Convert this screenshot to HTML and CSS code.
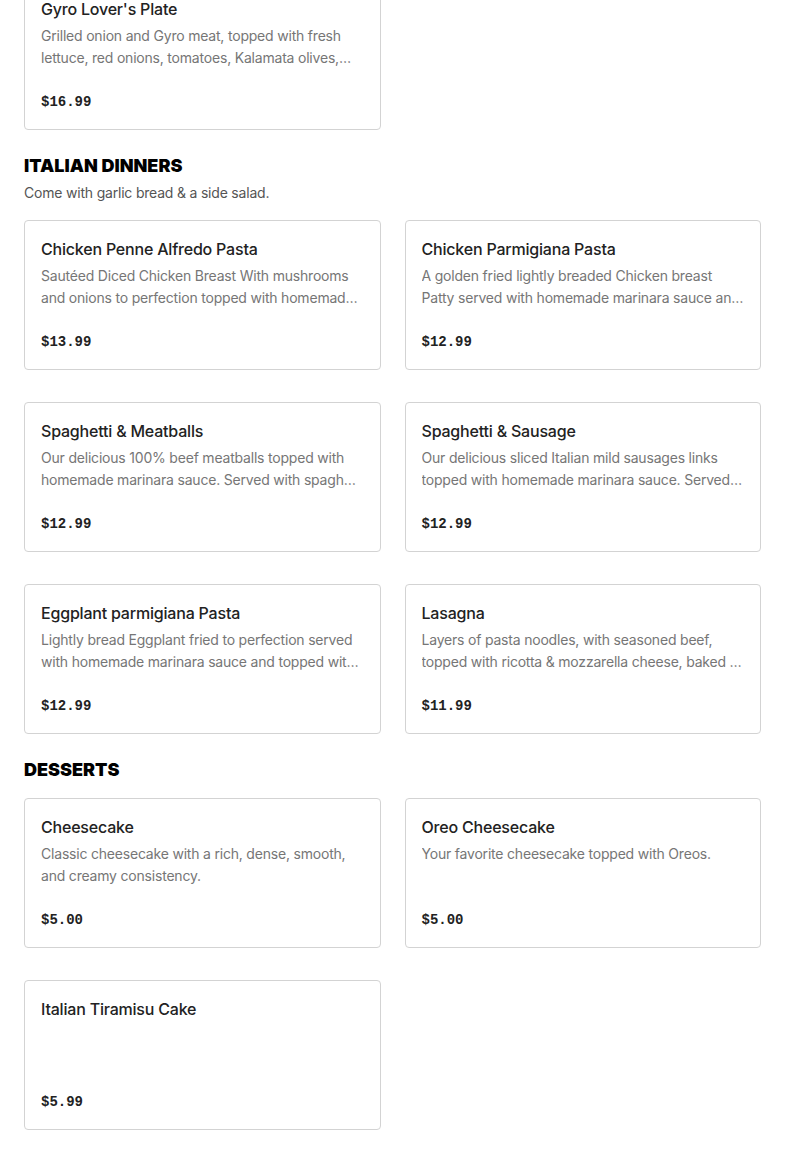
FILE: index.html
```html
<!DOCTYPE html>
<html lang="en">

<head>
    <meta charset="UTF-8">
    <meta name="viewport" content="width=device-width, initial-scale=1.0">
    <title>Menu</title>
    <link rel="stylesheet" href="styles.css">
</head>

<body>
    <div class="menu">
        <section class="section section-top">
            <div class="grid">
                <div class="card">
                    <h3 class="card-title">Gyro Lover's Plate</h3>
                    <p class="card-desc">Grilled onion and Gyro meat, topped with fresh lettuce, red onions, tomatoes, Kalamata olives, feta cheese and tzatziki sauce.</p>
                    <div class="card-price">$16.99</div>
                </div>
            </div>
        </section>

        <section class="section">
            <h2 class="section-title">ITALIAN DINNERS</h2>
            <p class="section-note">Come with garlic bread &amp; a side salad.</p>
            <div class="grid">
                <div class="card">
                    <h3 class="card-title">Chicken Penne Alfredo Pasta</h3>
                    <p class="card-desc">Sautéed Diced Chicken Breast With mushrooms and onions to perfection topped with homemade alfredo sauce.</p>
                    <div class="card-price">$13.99</div>
                </div>
                <div class="card">
                    <h3 class="card-title">Chicken Parmigiana Pasta</h3>
                    <p class="card-desc">A golden fried lightly breaded Chicken breast Patty served with homemade marinara sauce and topped with mozzarella cheese.</p>
                    <div class="card-price">$12.99</div>
                </div>
                <div class="card">
                    <h3 class="card-title">Spaghetti &amp; Meatballs</h3>
                    <p class="card-desc">Our delicious 100% beef meatballs topped with homemade marinara sauce. Served with spaghetti pasta.</p>
                    <div class="card-price">$12.99</div>
                </div>
                <div class="card">
                    <h3 class="card-title">Spaghetti &amp; Sausage</h3>
                    <p class="card-desc">Our delicious sliced Italian mild sausages links topped with homemade marinara sauce. Served with spaghetti pasta.</p>
                    <div class="card-price">$12.99</div>
                </div>
                <div class="card">
                    <h3 class="card-title">Eggplant parmigiana Pasta</h3>
                    <p class="card-desc">Lightly bread Eggplant fried to perfection served with homemade marinara sauce and topped with mozzarella cheese.</p>
                    <div class="card-price">$12.99</div>
                </div>
                <div class="card">
                    <h3 class="card-title">Lasagna</h3>
                    <p class="card-desc">Layers of pasta noodles, with seasoned beef, topped with ricotta &amp; mozzarella cheese, baked in homemade marinara sauce.</p>
                    <div class="card-price">$11.99</div>
                </div>
            </div>
        </section>

        <section class="section">
            <h2 class="section-title">DESSERTS</h2>
            <div class="grid">
                <div class="card">
                    <h3 class="card-title">Cheesecake</h3>
                    <p class="card-desc">Classic cheesecake with a rich, dense, smooth, and creamy consistency.</p>
                    <div class="card-price">$5.00</div>
                </div>
                <div class="card">
                    <h3 class="card-title">Oreo Cheesecake</h3>
                    <p class="card-desc">Your favorite cheesecake topped with Oreos.</p>
                    <div class="card-price">$5.00</div>
                </div>
                <div class="card">
                    <h3 class="card-title">Italian Tiramisu Cake</h3>
                    <p class="card-desc"></p>
                    <div class="card-price">$5.99</div>
                </div>
            </div>
        </section>
    </div>
</body>

</html>
```

FILE: styles.css
```css
body {
    font-family: Inter, "Liberation Sans", sans-serif;
    margin: 0;
    padding: 0;
    background-color: #fff;
    color: #222;
}

.menu {
    padding: 0 24px 24px;
}

.section {
    margin-top: 23px;
}

.section-top {
    margin-top: -20px;
}

.section-title {
    margin: 0;
    font-size: 18px;
    line-height: 26px;
    font-weight: 900;
    color: #000;
}

.section-note {
    margin: 4px 0 0;
    font-size: 14px;
    line-height: 20px;
    letter-spacing: -0.2px;
    color: #555;
}

.section-title + .grid {
    margin-top: 15px;
}

.section-note + .grid {
    margin-top: 17px;
}

.grid {
    display: grid;
    grid-template-columns: 1fr 1fr;
    column-gap: 24px;
    row-gap: 32px;
}

.card {
    display: flex;
    flex-direction: column;
    height: 150px;
    box-sizing: border-box;
    padding: 16px;
    border: 1px solid #d3d3d3;
    border-radius: 4px;
}

.card-title {
    margin: 0;
    font-size: 16px;
    line-height: 24px;
    font-weight: 500;
    letter-spacing: -0.2px;
    color: #222;
}

.card-desc {
    margin: 4px 0 0;
    min-height: 44px;
    font-size: 14px;
    line-height: 22px;
    letter-spacing: -0.2px;
    color: #767676;
    display: -webkit-box;
    -webkit-line-clamp: 2;
    -webkit-box-orient: vertical;
    overflow: hidden;
}

.card-price {
    margin-top: auto;
    font-family: "Liberation Mono", monospace;
    font-size: 14px;
    line-height: 22px;
    font-weight: bold;
    color: #222;
}
```
